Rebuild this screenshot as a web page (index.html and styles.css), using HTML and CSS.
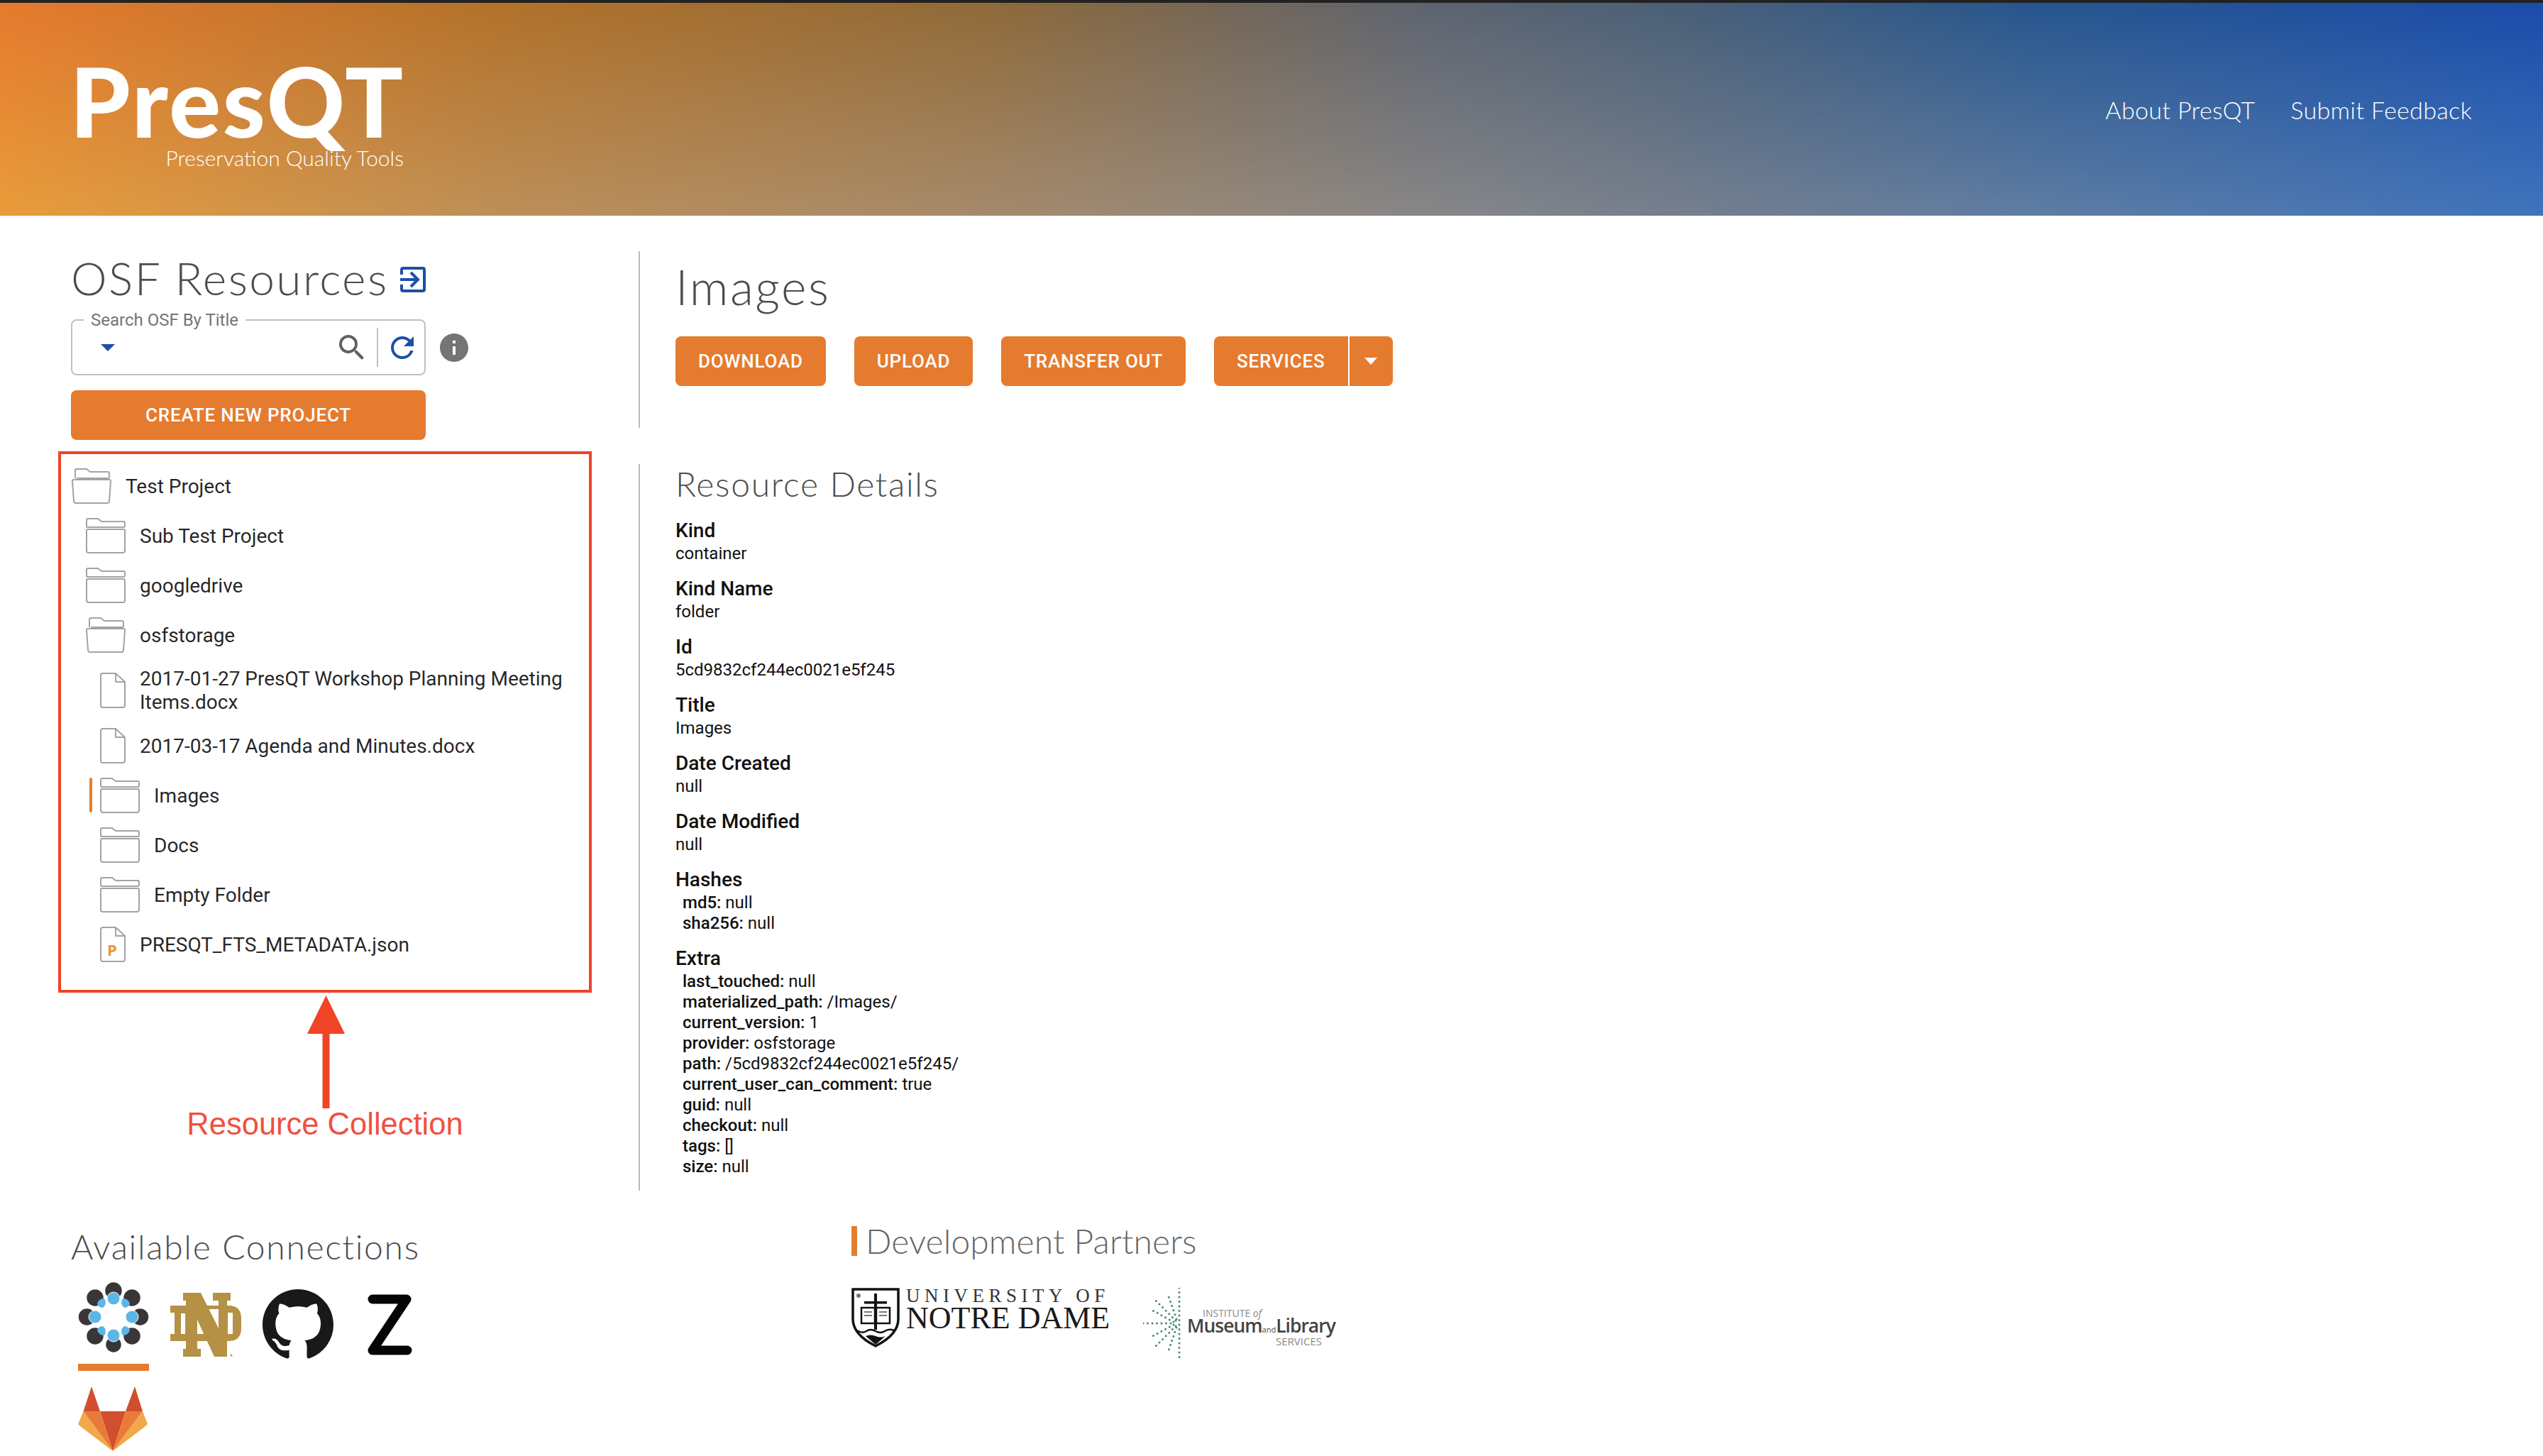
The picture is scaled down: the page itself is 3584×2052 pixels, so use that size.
FILE: index.html
```html
<!DOCTYPE html>
<html lang="en">
<head>
<meta charset="utf-8">
<title>PresQT</title>
<link rel="stylesheet" href="styles.css">
</head>
<body>
<svg class="defs" width="0" height="0" aria-hidden="true">
  <symbol id="folder" viewBox="0 0 56 50">
    <path d="M1 12V3a2 2 0 0 1 2-2h14l5 4h31a2 2 0 0 1 2 2v4a2 2 0 0 1-2 2H3a2 2 0 0 1-2-1z" fill="none" stroke="#a3a3a3" stroke-width="2"/>
    <path d="M3 16h50a2 2 0 0 1 2 2v28a3 3 0 0 1-3 3H4a3 3 0 0 1-3-3V18a2 2 0 0 1 2-2z" fill="none" stroke="#a3a3a3" stroke-width="2"/>
  </symbol>
  <symbol id="folder-open" viewBox="0 0 56 50">
    <path d="M5 14V3a2 2 0 0 1 2-2h14l5 4h25a2 2 0 0 1 2 2v5a2 2 0 0 1-2 2H7" fill="none" stroke="#a3a3a3" stroke-width="2"/>
    <path d="M3 16h50a2 2 0 0 1 2 2l-2 28a3 3 0 0 1-3 3H6a3 3 0 0 1-3-3L1 18a2 2 0 0 1 2-2z" fill="none" stroke="#a3a3a3" stroke-width="2"/>
  </symbol>
  <symbol id="file" viewBox="0 0 36 50">
    <path d="M22 1H4a3 3 0 0 0-3 3v42a3 3 0 0 0 3 3h28a3 3 0 0 0 3-3V13" fill="none" stroke="#a3a3a3" stroke-width="2"/>
    <path d="M22 1v12h13z" fill="none" stroke="#a3a3a3" stroke-width="2" stroke-linejoin="round"/>
  </symbol>
</svg>

<header class="topbar">
  <div class="brand">
    <div class="brand-name">PresQT</div>
    <div class="brand-sub">Preservation Quality Tools</div>
  </div>
  <nav class="topnav">
    <a class="topnav-link">About PresQT</a>
    <a class="topnav-link">Submit Feedback</a>
  </nav>
</header>

<main class="page">
  <div class="columns">
    <section class="left">
      <h2 class="title title-left">OSF Resources
        <svg class="title-icon" viewBox="0 0 36 36"><path d="M2 11V4a2 2 0 0 1 2-2h28a2 2 0 0 1 2 2v28a2 2 0 0 1-2 2H4a2 2 0 0 1-2-2v-7" fill="none" stroke="#1c4fa8" stroke-width="4"/><path d="M0 18h25M15 8l10 10-10 10" fill="none" stroke="#1c4fa8" stroke-width="4"/></svg>
      </h2>
      <div class="search-row">
        <div class="search">
          <span class="search-label">Search OSF By Title</span>
          <svg class="caret" viewBox="0 0 20 10"><path d="M0 0h20L10 10z" fill="#1c4fa8"/></svg>
          <svg class="search-icon" viewBox="3 3 17.5 17.5"><path fill="#616161" d="M15.5 14h-.79l-.28-.27A6.471 6.471 0 0 0 16 9.5 6.5 6.5 0 1 0 9.5 16c1.61 0 3.09-.59 4.23-1.57l.27.28v.79l5 4.99L20.49 19l-4.99-5zm-6 0C7.01 14 5 11.99 5 9.5S7.01 5 9.5 5 14 7.01 14 9.5 11.99 14 9.5 14z"/></svg>
          <span class="search-sep"></span>
          <svg class="refresh-icon" viewBox="4 4 16 16"><path fill="#1c4fa8" d="M17.65 6.35A7.958 7.958 0 0 0 12 4c-4.42 0-7.99 3.58-7.99 8s3.57 8 7.99 8c3.73 0 6.84-2.55 7.73-6h-2.08A5.99 5.99 0 0 1 12 18c-3.31 0-6-2.69-6-6s2.69-6 6-6c1.66 0 3.14.69 4.22 1.78L13 11h7V4l-2.35 2.35z"/></svg>
        </div>
        <svg class="info-icon" viewBox="2 2 20 20"><path fill="#757575" d="M12 2C6.48 2 2 6.48 2 12s4.48 10 10 10 10-4.48 10-10S17.52 2 12 2zm1 15h-2v-6h2v6zm0-8h-2V7h2v2z"/></svg>
      </div>
      <button class="btn btn-wide">CREATE NEW PROJECT</button>

      <ul class="tree">
        <li class="row lvl0"><svg class="ico-folder"><use href="#folder-open"/></svg><span>Test Project</span></li>
        <li class="row lvl1"><svg class="ico-folder"><use href="#folder"/></svg><span>Sub Test Project</span></li>
        <li class="row lvl1"><svg class="ico-folder"><use href="#folder"/></svg><span>googledrive</span></li>
        <li class="row lvl1"><svg class="ico-folder"><use href="#folder-open"/></svg><span>osfstorage</span></li>
        <li class="row lvl2"><svg class="ico-file"><use href="#file"/></svg><span>2017-01-27 PresQT Workshop Planning Meeting Items.docx</span></li>
        <li class="row lvl2"><svg class="ico-file"><use href="#file"/></svg><span>2017-03-17 Agenda and Minutes.docx</span></li>
        <li class="row lvl2 selected"><svg class="ico-folder"><use href="#folder"/></svg><span>Images</span></li>
        <li class="row lvl2"><svg class="ico-folder"><use href="#folder"/></svg><span>Docs</span></li>
        <li class="row lvl2"><svg class="ico-folder"><use href="#folder"/></svg><span>Empty Folder</span></li>
        <li class="row lvl2"><svg class="ico-file" viewBox="0 0 36 50"><use href="#file" width="36" height="50"/><text x="10" y="41" class="file-p">P</text></svg><span>PRESQT_FTS_METADATA.json</span></li>
      </ul>

      <div class="callout">
        <svg class="callout-arrow" viewBox="0 0 54 160"><path fill="#ef4426" d="M26.500 0L53 54H31.500V159H21.500V54H0z"/></svg>
        <div class="callout-text">Resource Collection</div>
      </div>
    </section>

    <section class="right">
      <div class="panel panel-actions">
        <h2 class="title title-images">Images</h2>
        <div class="actions">
          <button class="btn">DOWNLOAD</button>
          <button class="btn">UPLOAD</button>
          <button class="btn">TRANSFER OUT</button>
          <div class="split">
            <button class="btn split-main">SERVICES</button>
            <button class="btn split-arrow"><svg class="split-caret" viewBox="0 0 18 10"><path d="M0 0h18L9 10z" fill="#fff"/></svg></button>
          </div>
        </div>
      </div>

      <div class="panel panel-details">
        <h3 class="subtitle">Resource Details</h3>
        <dl class="details">
          <div class="detail"><dt>Kind</dt><dd>container</dd></div>
          <div class="detail"><dt>Kind Name</dt><dd>folder</dd></div>
          <div class="detail"><dt>Id</dt><dd>5cd9832cf244ec0021e5f245</dd></div>
          <div class="detail"><dt>Title</dt><dd>Images</dd></div>
          <div class="detail"><dt>Date Created</dt><dd>null</dd></div>
          <div class="detail"><dt>Date Modified</dt><dd>null</dd></div>
          <div class="detail"><dt>Hashes</dt>
            <dd class="sub"><b>md5:</b> null</dd>
            <dd class="sub"><b>sha256:</b> null</dd>
          </div>
          <div class="detail"><dt>Extra</dt>
            <dd class="sub"><b>last_touched:</b> null</dd>
            <dd class="sub"><b>materialized_path:</b> /Images/</dd>
            <dd class="sub"><b>current_version:</b> 1</dd>
            <dd class="sub"><b>provider:</b> osfstorage</dd>
            <dd class="sub"><b>path:</b> /5cd9832cf244ec0021e5f245/</dd>
            <dd class="sub"><b>current_user_can_comment:</b> true</dd>
            <dd class="sub"><b>guid:</b> null</dd>
            <dd class="sub"><b>checkout:</b> null</dd>
            <dd class="sub"><b>tags:</b> []</dd>
            <dd class="sub"><b>size:</b> null</dd>
          </div>
        </dl>
      </div>
    </section>
  </div>

  <footer class="footer">
    <section class="connections">
      <h3 class="subtitle conn-title">Available Connections</h3>
      <div class="conn-grid">
        <div class="conn active">
          <svg class="conn-icon" viewBox="0 0 100 100">
            <g fill="#3a3638" stroke="#fff" stroke-width="1.500">
              <circle cx="50" cy="12" r="12.500"/><circle cx="24" cy="22" r="12.500"/><circle cx="76" cy="22" r="12.500"/>
              <circle cx="12.500" cy="49" r="12.500"/><circle cx="87.500" cy="49" r="12.500"/>
              <circle cx="24" cy="76" r="12.500"/><circle cx="76" cy="76" r="12.500"/><circle cx="50" cy="88" r="11.500"/>
            </g>
            <g fill="#5bb6e8">
              <path d="M27 31a9 9 0 0 1 10-8 9 9 0 0 1-2 13 9 9 0 0 1-8-5z"/>
              <path d="M73 31a9 9 0 0 0-10-8 9 9 0 0 0 2 13 9 9 0 0 0 8-5z"/>
              <path d="M27 67a9 9 0 0 0 10 8 9 9 0 0 0-2-13 9 9 0 0 0-8 5z"/>
              <path d="M73 67a9 9 0 0 1-10 8 9 9 0 0 1 2-13 9 9 0 0 1 8 5z"/>
            </g>
            <g fill="#5bb6e8" stroke="#fff" stroke-width="1">
              <circle cx="50" cy="23" r="9"/><circle cx="24" cy="49" r="9"/><circle cx="76" cy="49" r="9"/><circle cx="50" cy="75" r="9"/>
            </g>
          </svg>
        </div>
        <div class="conn">
          <svg class="conn-icon conn-tall" viewBox="0 -15 100 110">
            <path fill="#b59145" d="M0 18H82Q100 18 100 36V50Q100 68 82 68H0V58H6V28H0Z"/>
            <path fill="#fff" d="M15 29h6v29h-6zM38 31l29 27H38zM53 23h15v30zM81 28h7v30h-7z"/>
            <path fill="#b59145" d="M18 0h25l25 50V11h-8V0h25v11h-5v79H62L38 38v41h5v11H18V79h4V11h-4z"/>
            <circle cx="86" cy="88" r="1.500" fill="#b59145"/>
          </svg>
        </div>
        <div class="conn">
          <svg class="conn-icon conn-tall" viewBox="0 -1.600 16 17.600"><path fill="#1a1818" d="M8 0C3.580 0 0 3.580 0 8c0 3.540 2.290 6.530 5.470 7.590.4.070.55-.17.55-.38 0-.19-.01-.82-.01-1.490-2.010.37-2.530-.49-2.690-.94-.09-.23-.48-.94-.82-1.130-.28-.15-.68-.52-.01-.53.63-.01 1.080.58 1.230.82.72 1.210 1.870.87 2.330.66.07-.52.28-.87.51-1.070-1.780-.2-3.640-.89-3.640-3.950 0-.87.31-1.590.82-2.150-.08-.2-.36-1.020.08-2.120 0 0 .67-.21 2.200.82.64-.18 1.320-.27 2-.27.68 0 1.360.09 2 .27 1.530-1.040 2.200-.82 2.200-.82.44 1.100.16 1.920.08 2.120.51.56.82 1.270.82 2.150 0 3.070-1.870 3.750-3.650 3.950.29.25.54.73.54 1.480 0 1.070-.01 1.930-.01 2.200 0 .21.15.46.55.38A8.013 8.013 0 0 0 16 8c0-4.420-3.580-8-8-8z"/></svg>
        </div>
        <div class="conn">
          <svg class="conn-icon conn-tall" viewBox="0 0 100 110"><path d="M25 24H73L25 96H74" fill="none" stroke="#050505" stroke-width="13" stroke-linecap="round" stroke-linejoin="round"/></svg>
        </div>
        <div class="conn">
          <svg class="conn-icon conn-gitlab" viewBox="0 0 98 91">
            <path fill="#d14e2f" d="M19 0l12 35H7.500zM80 0l11 35H67zM31 35h36L49 91z"/>
            <path fill="#ea7a3a" d="M7.500 35H31l18 56zM91 35H67L49 91z"/>
            <path fill="#f0a848" d="M7.500 35L0 53l3 3 46 35zM91 35l7 18-3 3-46 35z"/>
          </svg>
        </div>
      </div>
    </section>
    <section class="partners">
      <h3 class="subtitle partners-title">Development Partners</h3>
      <div class="partner-logos">
        <div class="nd">
          <svg class="nd-shield" viewBox="0 0 68 84">
            <path d="M2 2H66V44C66 62 50 74 34 82 18 74 2 62 2 44z" fill="#fff" stroke="#111" stroke-width="3.500"/>
            <path d="M32 8h4v11h14v3.500H36V27H32v-4.500H18V19H32z" fill="#111"/>
            <path d="M14 28h19v22H14zM35 28h19v22H35z" fill="#fff" stroke="#111" stroke-width="2.500"/>
            <path d="M18 34h11M18 39h11M39 34h11M39 39h11" stroke="#777" stroke-width="2"/>
            <path d="M32 50h4v9h-4z" fill="#111"/>
            <path d="M8 60q7 5 13 1t13 0 13 0 13-1" fill="none" stroke="#111" stroke-width="2.500"/>
            <path d="M20 68q7-3 14 0t14 0L34 80z" fill="#111"/>
            <circle cx="10" cy="11" r="3" fill="#777"/>
          </svg>
          <div class="nd-words">
            <div class="nd-top">UNIVERSITY OF</div>
            <div class="nd-main">NOTRE DAME</div>
          </div>
        </div>
        <div class="imls">
          <svg class="imls-burst" viewBox="0 0 54 100">
            <g stroke="#3f8a72" stroke-width="3" stroke-linecap="round" stroke-dasharray="0 6.500" fill="none">
              <path d="M51 0V100"/><path d="M0 50H44"/>
              <path d="M46 46L14 14"/><path d="M47 44L36 12"/><path d="M43 48L10 30"/>
              <path d="M46 54L14 86"/><path d="M47 56L36 88"/><path d="M43 52L10 70"/>
            </g>
          </svg>
          <div class="imls-words">
            <div class="imls-top">INSTITUTE <i>of</i></div>
            <div class="imls-main">Museum<small>and</small>Library</div>
            <div class="imls-sub">SERVICES</div>
          </div>
        </div>
      </div>
    </section>
  </footer>
</main>
</body>
</html>
```
FILE: styles.css
```css
* { box-sizing: border-box; }
html, body { margin: 0; padding: 0; background: #fff; }
body { font-family: Roboto, "Liberation Sans", sans-serif; color: rgba(0,0,0,.87); height: 2052px; overflow: hidden; }
.defs { position: absolute; }
h2, h3, ul, dl, dd { margin: 0; padding: 0; }
ul { list-style: none; }

.topbar {
  position: relative;
  height: 304px;
  border-top: 4px solid #222;
  display: flex;
  justify-content: space-between;
  background: linear-gradient(to right, #e67a2e 0%, #b3722a 19.5%, #8f6a3a 39%, #5e6470 56%, #4a6078 66%, #27568e 80%, #1b4cab 100%);
  padding: 0 100px 0 105px;
}
.topbar::before {
  content: "";
  position: absolute;
  inset: 0;
  background: linear-gradient(to right, #e89c3a 0%, #bd8f58 19.5%, #a58a6c 39%, #84868a 58%, #767f8e 66%, #5f7da3 80%, #3f74bc 100%);
  -webkit-mask-image: linear-gradient(to bottom, transparent, #000);
  mask-image: linear-gradient(to bottom, transparent, #000);
}
.brand { position: relative; display: flex; flex-direction: column; align-items: flex-end; width: 466px; padding-top: 83px; color: #fff; }
.brand-name { font-family: Lato, sans-serif; font-weight: 900; font-size: 136px; line-height: 110px; letter-spacing: 2.800px; white-space: nowrap; }
.brand-sub { font-family: Lato, sans-serif; font-weight: 300; font-size: 30px; line-height: 34px; margin: 8px 2px 0 0; white-space: nowrap; }
.topnav { position: relative; display: flex; gap: 50px; padding-top: 132px; }
.topnav-link { font-family: Lato, sans-serif; font-weight: 300; font-size: 34px; line-height: 38px; letter-spacing: .35px; color: #fff; white-space: nowrap; }

.page { padding: 50px 0 0 100px; }
.columns { display: flex; }
.left { width: 800px; flex: none; }
.title { font-family: Lato, sans-serif; font-weight: 300; font-size: 64px; line-height: 76px; letter-spacing: 2.400px; color: #4c4c4c; display: flex; align-items: center; }
.title-images { font-size: 68px; letter-spacing: 2.500px; margin-bottom: 0; }
.title-icon { width: 36px; height: 36px; margin-left: 16px; margin-top: 4px; }

.search-row { display: flex; align-items: center; gap: 20px; margin-top: 20px; }
.search { position: relative; width: 500px; height: 79px; border: 2px solid #c0c0c0; border-radius: 8px; display: flex; align-items: center; padding-left: 40px; }
.search-label { position: absolute; left: 16px; top: -14px; padding: 0 10px; background: #fff; font-size: 24px; line-height: 26px; color: #757575; }
.caret { width: 20px; height: 10px; flex: none; }
.search-icon { width: 35px; height: 35px; margin-left: 316px; flex: none; }
.search-sep { width: 2px; height: 55px; background: #c0c0c0; margin-left: 18px; flex: none; }
.refresh-icon { width: 32px; height: 32px; margin-left: 18px; flex: none; }
.info-icon { width: 40px; height: 40px; flex: none; }

.btn {
  border: 0; border-radius: 8px; height: 70px; padding: 0 32px; background: #e57b2f; color: #fff;
  font-family: Roboto, sans-serif; font-weight: 500; font-size: 26px; letter-spacing: .8px; display: block;
}
.btn-wide { width: 500px; margin-top: 21px; }

.tree { width: 752px; margin: 16px 0 0 -18px; padding: 10px 0 29px; border: 4px solid #ef4426; }
.row { position: relative; display: flex; align-items: center; gap: 20px; min-height: 70px; padding: 10px 20px 10px 15px; font-size: 28px; line-height: 33px; }
.lvl1 { padding-left: 35px; }
.lvl2 { padding-left: 55px; }
.ico-folder { width: 56px; height: 50px; flex: none; }
.ico-file { width: 36px; height: 50px; flex: none; }
.file-p { font-family: "Open Sans", sans-serif; font-weight: 700; font-size: 22px; fill: #e8953f; }
.selected::before { content: ""; position: absolute; left: 40px; top: 10px; width: 4px; height: 49px; background: #e07f2f; border-radius: 2px; }

.callout { width: 752px; margin-left: -18px; display: flex; flex-direction: column; align-items: center; margin-top: 4px; }
.callout-arrow { width: 54px; height: 160px; display: block; margin-left: 3px; }
.callout-text { font-family: "Liberation Sans", sans-serif; font-size: 43.500px; line-height: 44px; color: #f0503e; margin-top: -1px; }

.right { flex: 1; }
.panel { border-left: 2px solid #bbb; padding-left: 50px; }
.panel-actions { height: 249px; padding-top: 12px; }
.actions { display: flex; gap: 40px; margin-top: 32px; }
.split { display: flex; gap: 2px; }
.split-main { border-radius: 8px 0 0 8px; }
.split-arrow { border-radius: 0 8px 8px 0; padding: 0; width: 61px; display: flex; align-items: center; justify-content: center; }
.split-caret { width: 18px; height: 10px; }
.panel-details { margin-top: 51px; height: 1024px; }
.subtitle { font-family: Lato, sans-serif; font-weight: 300; font-size: 48px; line-height: 56px; letter-spacing: 1.700px; color: #4c4c4c; }
.details { margin-top: 20px; }
.detail { margin-bottom: 17px; }
dt { font-size: 28px; line-height: 36px; font-weight: 500; color: #111; }
dd { font-size: 24px; line-height: 29px; color: #111; }
dd.sub { padding-left: 10px; }
dd b { font-weight: 500; }

.footer { display: flex; margin-top: 50px; }
.connections { width: 1100px; flex: none; }
.conn-title { margin-top: 1px; }
.conn-grid { display: grid; grid-template-columns: repeat(4, 100px); column-gap: 30px; row-gap: 22px; margin: 22px 0 0 10px; align-items: start; }
.conn-icon { width: 100px; height: 100px; display: block; }
.conn-tall { height: 110px; }
.conn.active .conn-icon { margin-bottom: 15px; }
.conn.active { border-bottom: 10px solid #e57b2f; }
.conn-gitlab { width: 98px; height: 91px; }
.partners-title { border-left: 8px solid #e07f2f; padding-left: 12px; height: 42px; line-height: 42px; letter-spacing: .1px; color: #666; }
.partner-logos { display: flex; margin-top: 45px; gap: 48px; }
.nd { display: flex; gap: 9px; }
.nd-shield { width: 68px; height: 84px; flex: none; }
.nd-words { font-family: "Liberation Serif", serif; color: #1a1a1a; width: 286px; }
.nd-top { font-size: 27px; line-height: 22px; letter-spacing: 6.500px; white-space: nowrap; color: #333; }
.nd-main { font-size: 44px; line-height: 40px; white-space: nowrap; margin-top: 1px; }
.imls { display: flex; align-items: flex-start; }
.imls-burst { width: 54px; height: 100px; flex: none; }
.imls-words { margin: 29px 0 0 8px; width: 210px; font-family: "Open Sans", sans-serif; color: #444; }
.imls-top { font-size: 14px; line-height: 14px; color: #888; padding-left: 22px; white-space: nowrap; }
.imls-main { font-size: 26.500px; line-height: 20px; letter-spacing: -1px; font-weight: 600; white-space: nowrap; }
.imls-main small { font-size: 11px; letter-spacing: 0; font-weight: 400; }
.imls-sub { font-size: 15px; line-height: 12px; color: #888; padding-left: 125px; white-space: nowrap; }
```
